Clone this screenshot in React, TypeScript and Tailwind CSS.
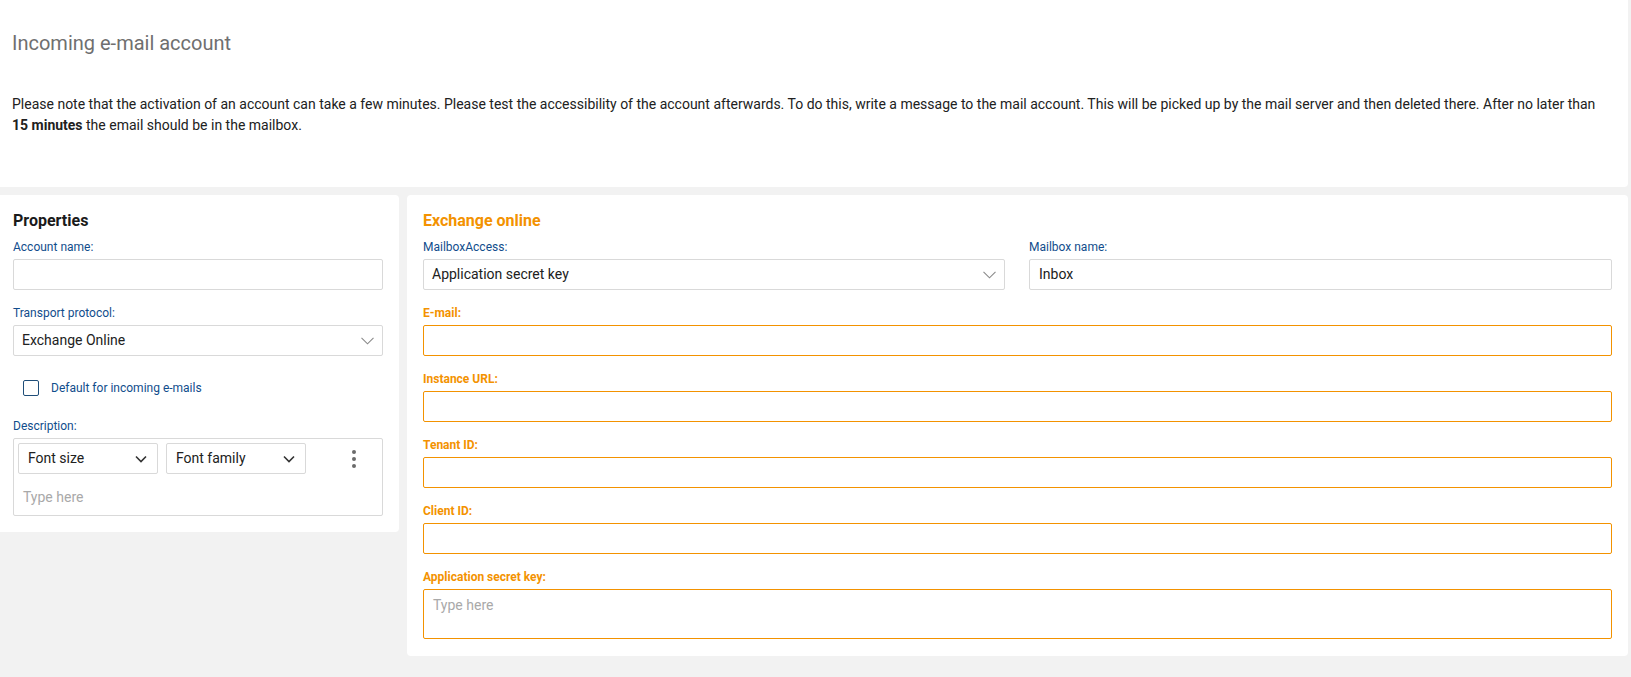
import React from "react";

const font = { fontFamily: "Roboto, 'Liberation Sans', sans-serif" };

function Chevron({ dark = false }: { dark?: boolean }) {
  return dark ? (
    <svg width="12" height="8" viewBox="0 0 12 8" fill="none">
      <path d="M1 1.5 L6 6.5 L11 1.5" stroke="#333333" strokeWidth="1.6" />
    </svg>
  ) : (
    <svg width="13" height="8" viewBox="0 0 13 8" fill="none">
      <path d="M0.5 0.8 L6.5 6.8 L12.5 0.8" stroke="#8a8a8a" strokeWidth="1.1" />
    </svg>
  );
}

function Label({ children, orange = false }: { children: React.ReactNode; orange?: boolean }) {
  return (
    <div
      className={
        orange
          ? "text-[12px] leading-4 mb-[4px] font-bold text-[#f39200]"
          : "text-[12px] leading-4 mb-[4px] text-[#114d8c]"
      }
    >
      {children}
    </div>
  );
}

function Input({ value, orange = false }: { value?: string; orange?: boolean }) {
  return (
    <div
      className={
        orange
          ? "h-[31px] border border-[#f39200] rounded-[2px] bg-white px-[9px] flex items-center text-[14px] text-[#212121]"
          : "h-[31px] border border-[#d9d9d9] rounded-[2px] bg-white px-[9px] flex items-center text-[14px] text-[#212121]"
      }
    >
      {value}
    </div>
  );
}

function Select({ value }: { value: string }) {
  return (
    <div className="h-[31px] border border-[#d9d9d9] rounded-[2px] bg-white pl-[8px] pr-[8px] flex items-center justify-between text-[14px] text-[#212121]">
      <span>{value}</span>
      <Chevron />
    </div>
  );
}

export default function App() {
  return (
    <div className="w-[1631px] h-[677px] bg-[#f2f2f2] pr-[3px] overflow-hidden" style={font}>
      <div className="bg-white rounded-br-[4px] h-[187px] pl-[12px] pt-[29px]">
        <div className="text-[20px] leading-[28px] text-[#6f6f6f]">Incoming e-mail account</div>
        <p className="mt-[37px] text-[14px] leading-[21px] text-[#212121] pr-[20px]">
          Please note that the activation of an account can take a few minutes. Please test the accessibility of the
          account afterwards. To do this, write a message to the mail account. This will be picked up by the mail
          server and then deleted there. After no later than <b className="font-bold">15 minutes</b> the email should
          be in the mailbox.
        </p>
      </div>

      <div className="flex items-start gap-[8px] mt-[8px]">
        {/* Left card */}
        <div className="w-[399px] shrink-0 bg-white rounded-r-[4px] pl-[13px] pr-[16px] pt-[16px] pb-[16px]">
          <div className="text-[16px] leading-[20px] font-bold text-[#1a1a1a] mb-[8px]">Properties</div>
          <Label>Account name:</Label>
          <Input />
          <div className="mt-[15px]">
            <Label>Transport protocol:</Label>
            <Select value="Exchange Online" />
          </div>
          <div className="flex items-center mt-[24px] pl-[10px] h-[16px]">
            <div className="w-[16px] h-[16px] border-[1.5px] border-[#1f4e79] rounded-[2px]" />
            <span className="ml-[12px] text-[12px] text-[#114d8c]">Default for incoming e-mails</span>
          </div>
          <div className="mt-[22px]">
            <Label>Description:</Label>
            <div className="border border-[#d9d9d9] rounded-[2px] h-[78px] px-[4px] pt-[4px]">
              <div className="flex items-center">
                <div className="w-[140px] h-[31px] border border-[#d9d9d9] rounded-[2px] flex items-center justify-between pl-[9px] pr-[10px] text-[14px] text-[#212121]">
                  <span>Font size</span>
                  <Chevron dark />
                </div>
                <div className="w-[140px] h-[31px] ml-[8px] border border-[#d9d9d9] rounded-[2px] flex items-center justify-between pl-[9px] pr-[10px] text-[14px] text-[#212121]">
                  <span>Font family</span>
                  <Chevron dark />
                </div>
                <div className="ml-[46px] flex flex-col gap-[3px]">
                  <div className="w-[4px] h-[4px] rounded-full bg-[#6b6b6b]" />
                  <div className="w-[4px] h-[4px] rounded-full bg-[#6b6b6b]" />
                  <div className="w-[4px] h-[4px] rounded-full bg-[#6b6b6b]" />
                </div>
              </div>
              <div className="mt-[13px] pl-[5px] text-[14px] text-[#a9a9a9]">Type here</div>
            </div>
          </div>
        </div>

        {/* Right card */}
        <div className="flex-1 bg-white rounded-[4px] pl-[16px] pr-[16px] pt-[16px] pb-[17px]">
          <div className="text-[16px] leading-[20px] font-bold text-[#f39200] mb-[8px]">Exchange online</div>
          <div className="flex gap-[24px]">
            <div className="w-[582px]">
              <Label>MailboxAccess:</Label>
              <Select value="Application secret key" />
            </div>
            <div className="flex-1">
              <Label>Mailbox name:</Label>
              <Input value="Inbox" />
            </div>
          </div>
          <div className="mt-[15px]">
            <Label orange>E-mail:</Label>
            <Input orange />
          </div>
          <div className="mt-[15px]">
            <Label orange>Instance URL:</Label>
            <Input orange />
          </div>
          <div className="mt-[15px]">
            <Label orange>Tenant ID:</Label>
            <Input orange />
          </div>
          <div className="mt-[15px]">
            <Label orange>Client ID:</Label>
            <Input orange />
          </div>
          <div className="mt-[15px]">
            <Label orange>Application secret key:</Label>
            <div className="h-[50px] border border-[#f39200] rounded-[2px] px-[9px] pt-[5px] text-[14px] text-[#a9a9a9]">
              Type here
            </div>
          </div>
        </div>
      </div>
    </div>
  );
}
